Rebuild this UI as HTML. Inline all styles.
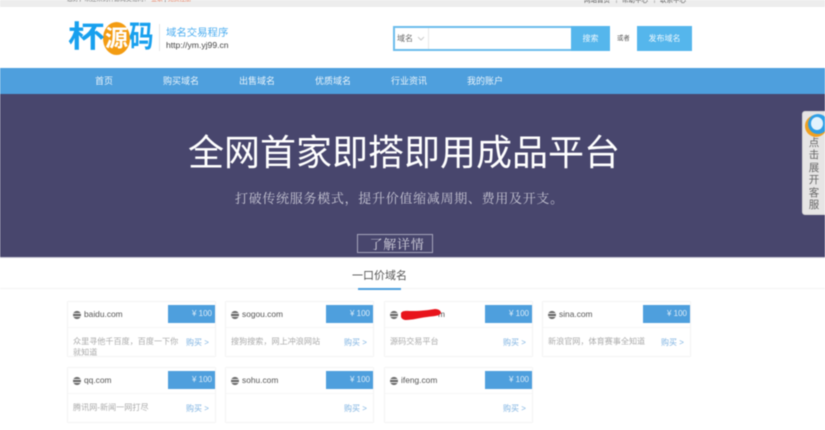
<!DOCTYPE html>
<html lang="zh-CN">
<head>
<meta charset="utf-8">
<title>域名交易程序</title>
<style>
html,body{margin:0;padding:0}
body{width:825px;height:430px;overflow:hidden;background:#fff;position:relative;font-family:"Liberation Sans","Noto Sans CJK SC",sans-serif;color:#444}
.a{position:absolute;white-space:nowrap}
.wrap{position:absolute;left:0;top:0;width:825px;height:430px;overflow:hidden;filter:blur(.4px)}
.nav{top:68px;left:0;width:825px;height:26px;background:#4e9fdd}
.nav span{position:absolute;top:7px;width:60px;margin-left:-30px;text-align:center;font-size:9px;line-height:13px;color:#eaf4fb}
.hero{top:94px;left:0;width:825px;height:163px;background:#48466d}
.card{position:absolute;width:147px;height:54px;border:1px solid #f4f4f4;box-sizing:content-box;background:#fff}
.card .l{position:absolute;left:0;right:0;top:25px;height:1px;background:#f6f6f6}
.card .p{position:absolute;left:100px;top:3px;width:47px;height:18px;background:#4e9fdd;color:#dcecf8;font-size:8px;line-height:17px;text-align:right;padding-right:3px;box-sizing:border-box}
.card .g{position:absolute;left:5px;top:9px;width:8px;height:8px;border-radius:50%;background:#666;overflow:hidden}
.card .g:before{content:"";position:absolute;left:0;right:0;top:2px;height:1px;background:#e6e6e6}
.card .g:after{content:"";position:absolute;left:0;right:0;top:5px;height:1px;background:#e6e6e6}
.card .n{position:absolute;left:16px;top:6px;font-size:8.4px;line-height:13px;color:#555;white-space:nowrap}
.card .d{position:absolute;left:5px;top:34px;width:108px;font-size:8.1px;line-height:11px;color:#aaa;height:20px;overflow:hidden}
.card .b{position:absolute;left:118px;top:35px;font-size:8px;line-height:11px;color:#80b4e2;white-space:nowrap}
</style>
</head>
<body>
<div class="wrap">

<div class="a" style="left:0;top:0;width:825px;height:7px;background:#ededed;overflow:hidden">
  <div class="a" style="left:67px;top:-5px;font-size:5.9px;line-height:11px;color:#555">您好，欢迎来到杯源码交易网！ <span style="color:#e8663f">登录</span> | <span style="color:#e8663f">免费注册</span></div>
  <div class="a" style="left:584px;top:-5px;font-size:6.5px;line-height:11px;color:#555">网站首页</div>
  <div class="a" style="left:616px;top:0;width:1px;height:3px;background:#bbb"></div>
  <div class="a" style="left:622px;top:-5px;font-size:6.5px;line-height:11px;color:#555">帮助中心</div>
  <div class="a" style="left:654px;top:0;width:1px;height:3px;background:#bbb"></div>
  <div class="a" style="left:660px;top:-5px;font-size:6.5px;line-height:11px;color:#555">联系中心</div>
</div>

<!-- logo -->
<div class="a" style="left:103px;top:22px;width:27px;height:33px;border-radius:50%;background:#f39c12"></div>
<div class="a" style="left:68px;top:19px;font-size:30px;line-height:38px;font-weight:bold;color:#18a0ee;transform:scaleX(1.22);transform-origin:left">杯</div>
<div class="a" style="left:105px;top:24px;font-size:23px;line-height:28px;font-weight:bold;color:#fff">源</div>
<div class="a" style="left:129px;top:19px;font-size:30px;line-height:38px;font-weight:bold;color:#18a0ee;transform:scaleX(.82);transform-origin:left">码</div>

<div class="a" style="left:159px;top:24px;width:1px;height:27px;background:#e6e6e6"></div>
<div class="a" style="left:166px;top:27px;font-size:10.4px;line-height:13px;color:#4eaef0">域名交易程序</div>
<div class="a" style="left:166px;top:40px;font-size:8.6px;line-height:11px;color:#444">http://ym.yj99.cn</div>

<!-- search -->
<div class="a" style="left:393px;top:26px;width:217px;height:25px;border:2px solid #6cbdec;box-sizing:border-box;background:#fff"></div>
<div class="a" style="left:397px;top:33px;font-size:8px;line-height:11px;color:#666">域名</div>
<svg class="a" style="left:417px;top:36px" width="8" height="5" viewBox="0 0 8 5"><path d="M1 1l3 3 3-3" fill="none" stroke="#ccc" stroke-width="1"/></svg>
<div class="a" style="left:428px;top:28px;width:1px;height:21px;background:#e8e8e8"></div>
<div class="a" style="left:571px;top:26px;width:39px;height:25px;background:#55b6ec;color:#eef8fe;font-size:8px;line-height:25px;text-align:center">搜索</div>
<div class="a" style="left:617px;top:34px;font-size:6.4px;line-height:9px;color:#555">或者</div>
<div class="a" style="left:637px;top:26px;width:55px;height:25px;background:#55b6ec;color:#eef8fe;font-size:8px;line-height:25px;text-align:center">发布域名</div>

<!-- nav -->
<div class="a nav">
  <span style="left:104px">首页</span>
  <span style="left:181px">购买域名</span>
  <span style="left:257px">出售域名</span>
  <span style="left:333px">优质域名</span>
  <span style="left:409px">行业资讯</span>
  <span style="left:485px">我的账户</span>
</div>

<!-- hero -->
<div class="a hero"></div>
<div class="a" style="left:188px;top:129px;font-size:36px;line-height:48px;color:#fff">全网首家即搭即用成品平台</div>
<div class="a" style="left:235px;top:188px;font-family:'Noto Serif CJK SC','Noto Serif CJK JP',serif;font-size:13px;letter-spacing:.7px;line-height:19px;color:#c6c5d3">打破传统服务模式，提升价值缩减周期、费用及开支。</div>
<div class="a" style="left:357px;top:234px;width:76px;height:19px;border:1px solid #a5a4ba;box-sizing:border-box;color:#d9d8e2;font-family:'Noto Serif CJK SC','Noto Serif CJK JP',serif;font-size:13px;line-height:17px;text-align:center;letter-spacing:.7px;padding-left:4px">了解详情</div>
<div class="a" style="left:0;top:257px;width:825px;height:1px;background:#c9c8d6"></div>

<!-- side widget -->
<div class="a" style="left:802px;top:111px;width:30px;height:104px;background:#e6e5e5;border-radius:3px;border:1px solid #d8d8d8;box-sizing:border-box"></div>
<div class="a" style="left:805px;top:115px;width:22px;height:22px;border-radius:50%;background:#f0a020"></div>
<div class="a" style="left:808px;top:114px;width:20px;height:20px;border-radius:50%;background:#2f9fe6"></div>
<div class="a" style="left:811px;top:117px;width:12px;height:13px;border-radius:50%;background:#e2f3fd"></div>
<div class="a" style="left:808px;top:137px;width:12px;font-size:10.5px;line-height:12.4px;color:#666;white-space:normal;text-align:center">点击展开客服</div>

<!-- section title -->
<div class="a" style="left:0;top:288px;width:825px;height:1px;background:#f3f3f3"></div>
<div class="a" style="left:352px;top:268px;font-size:11px;line-height:16px;color:#555">一口价域名</div>
<div class="a" style="left:358px;top:288px;width:43px;height:2px;background:#4e9fdd"></div>

<!-- cards -->
<div class="card" style="left:67px;top:301px"><div class="l"></div><div class="p">¥ 100</div><div class="g"></div><div class="n">baidu.com</div><div class="d">众里寻他千百度，百度一下你就知道</div><div class="b">购买 &gt;</div></div>
<div class="card" style="left:225px;top:301px"><div class="l"></div><div class="p">¥ 100</div><div class="g"></div><div class="n">sogou.com</div><div class="d">搜狗搜索，网上冲浪网站</div><div class="b">购买 &gt;</div></div>
<div class="card" style="left:384px;top:301px"><div class="l"></div><div class="p">¥ 100</div><div class="g"></div><div class="n" style="left:53px">m</div><div class="d">源码交易平台</div><div class="b">购买 &gt;</div>
  <svg style="position:absolute;left:16px;top:6px" width="41" height="13" viewBox="0 0 41 13"><path d="M0 5 C2 2 6 3 12 3 C20 3 28 2 34 1 C38 1 40 3 40 5 C39 8 33 8 26 9 C18 10 11 12 5 12 C1 12 -1 9 0 5Z" fill="#e8141c"/></svg>
</div>
<div class="card" style="left:542px;top:301px"><div class="l"></div><div class="p">¥ 100</div><div class="g"></div><div class="n">sina.com</div><div class="d">新浪官网，体育赛事全知道</div><div class="b">购买 &gt;</div></div>

<div class="card" style="left:67px;top:367px"><div class="l"></div><div class="p">¥ 100</div><div class="g"></div><div class="n">qq.com</div><div class="d">腾讯网-新闻一网打尽</div><div class="b">购买 &gt;</div></div>
<div class="card" style="left:225px;top:367px"><div class="l"></div><div class="p">¥ 100</div><div class="g"></div><div class="n">sohu.com</div><div class="d"></div><div class="b">购买 &gt;</div></div>
<div class="card" style="left:384px;top:367px"><div class="l"></div><div class="p">¥ 100</div><div class="g"></div><div class="n">ifeng.com</div><div class="d"></div><div class="b">购买 &gt;</div></div>

</div>
</body>
</html>
